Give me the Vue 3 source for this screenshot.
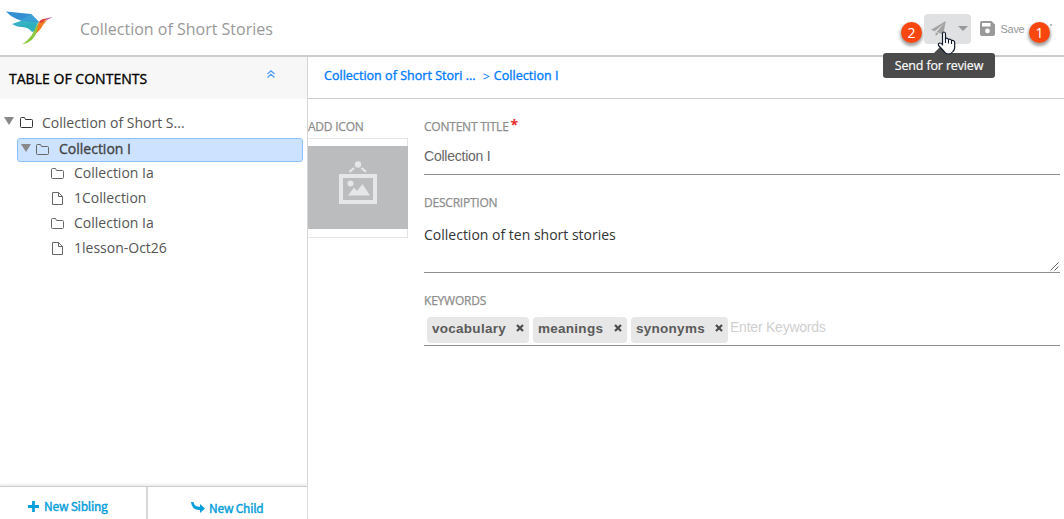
<script setup>
const children = [
  { label: 'Collection Ia', type: 'folder' },
  { label: '1Collection', type: 'file' },
  { label: 'Collection Ia', type: 'folder' },
  { label: '1lesson-Oct26', type: 'file' },
]
const keywords = ['vocabulary', 'meanings', 'synonyms']
</script>

<template>
  <div class="app">
    <header class="topbar">
      <svg class="logo" width="48" height="36" viewBox="0 0 48 36">
        <path d="M0 .5 L25 3 L33 11 L30 14 L16 10 Q6 7 0 .5Z" fill="#348fd2" />
        <path d="M25 3 L33 11 L15 9Z" fill="#3ba0d6" />
        <path d="M6 13 L16 9.500 L32 11 L29 20 L24 17 L10 15Z" fill="#35b2c4" />
        <path d="M10 15 L30 12 L29 20 L26 21 Q22 16 16 16Z" fill="#2faebb" />
        <path d="M33 11 L41 9 L37 14 Q34 20 28 24 L30 17Z" fill="#f47b20" />
        <path d="M33 11 Q36 7 41 8 L35 12Z" fill="#de4136" />
        <path d="M39 7.500 L47 6 L41 9Z" fill="#c75b9d" />
        <path d="M32 12.500 Q29 17 27 22 Q23 29 16 33.500 Q28 31 31 20Z" fill="#8bc63f" />
      </svg>
      <h1>Collection of Short Stories</h1>
      <div class="actions">
        <span class="badge two">2</span>
        <button class="send">
          <svg width="15" height="15" viewBox="0 0 16 16"><path d="M15.800 0 L0 9.200 L4 11 L13.500 3 L6 11.700 L13 14.500Z M5 12 V16 L8 13.400Z" fill="#a3a3a3" /></svg>
          <i></i>
        </button>
        <button class="save">
          <svg width="15" height="15" viewBox="0 0 15 15"><path fill-rule="evenodd" d="M2 0 H11.500 L15 3.500 V13 Q15 15 13 15 H2 Q0 15 0 13 V2 Q0 0 2 0Z M2 2 V5.500 H10.500 V2Z M7.500 7.500 A2.400 2.400 0 1 0 7.500 12.300 A2.400 2.400 0 1 0 7.500 7.500Z" fill="#999" /></svg>
          <span>Save</span>
        </button>
        <span class="badge one">1</span>
      </div>
      <div class="tooltip">Send for review</div>
      <svg class="cursor" width="19" height="24" viewBox="0 0 19 24">
        <path d="M5.500 13.500 V3 Q5.500 1 7 1 Q8.500 1 8.500 3 V7.500 Q10.300 6.500 11.500 8.500 Q13.500 7.500 14.500 9.500 Q17.700 9 17.700 12 V16.500 Q17.700 18.500 16 20.500 Q14 23 11.500 23 Q8.500 23 7.500 21 Q5 18 1.500 14.500 Q1 12.300 2.500 12 Q4 11.800 5.500 13.500Z" fill="#fff" stroke="#111a2b" stroke-width="1.200" />
        <path d="M8.500 7 V12 M11.500 8.500 V12.500 M14.500 9.500 V13" stroke="#111a2b" stroke-width="1.100" />
      </svg>
    </header>

    <div class="body">
      <aside>
        <div class="toc-head">
          <h2>TABLE OF CONTENTS</h2>
          <svg width="8" height="8" viewBox="0 0 8 8"><path d="M.5 4 L4 .8 L7.500 4 M.5 7.500 L4 4.300 L7.500 7.500" fill="none" stroke="#4b9cf5" stroke-width="1.200" /></svg>
        </div>
        <div class="tree">
          <div class="row root">
            <i class="arrow"></i>
            <svg width="13" height="11" viewBox="0 0 13 11"><path d="M.5 9.500 V1.500 Q.5 .5 1.500 .5 H4.500 L5.500 2.500 H11.500 Q12.500 2.500 12.500 3.500 V9.500 Q12.500 10.500 11.500 10.500 H1.500 Q.5 10.500 .5 9.500Z" fill="none" stroke="#333" /></svg>
            <span>Collection of Short S...</span>
          </div>
          <div class="row selected">
            <i class="arrow"></i>
            <svg width="13" height="11" viewBox="0 0 13 11"><path d="M.5 9.500 V1.500 Q.5 .5 1.500 .5 H4.500 L5.500 2.500 H11.500 Q12.500 2.500 12.500 3.500 V9.500 Q12.500 10.500 11.500 10.500 H1.500 Q.5 10.500 .5 9.500Z" fill="none" stroke="#666" /></svg>
            <span>Collection I</span>
          </div>
          <div v-for="(c, i) in children" :key="i" class="row child">
            <svg v-if="c.type === 'folder'" width="13" height="11" viewBox="0 0 13 11"><path d="M.5 9.500 V1.500 Q.5 .5 1.500 .5 H4.500 L5.500 2.500 H11.500 Q12.500 2.500 12.500 3.500 V9.500 Q12.500 10.500 11.500 10.500 H1.500 Q.5 10.500 .5 9.500Z" fill="none" stroke="#666" /></svg>
            <svg v-else width="13" height="13" viewBox="0 0 13 13"><path d="M1.500 .5 H7.500 L11.500 4.500 V12.500 H1.500Z M7.500 .5 V4.500 H11.500" fill="none" stroke="#666" /></svg>
            <span>{{ c.label }}</span>
          </div>
        </div>
        <footer>
          <button class="sibling">
            <svg width="11" height="11" viewBox="0 0 11 11"><path d="M5.500 0 V11 M0 5.500 H11" stroke="#069edb" stroke-width="2.800" /></svg>
            <span>New Sibling</span>
          </button>
          <button class="newchild">
            <svg width="14" height="11" viewBox="0 0 14 11"><path d="M0 0 H2.500 Q3 4.800 9 4.700 V2 L14 6.500 L9 11 V8 Q1 8.500 0 0Z" fill="#069edb" /></svg>
            <span>New Child</span>
          </button>
        </footer>
      </aside>

      <main>
        <nav><span class="crumb-a">Collection of Short Stori ...</span><b>&gt;</b><span class="crumb-b">Collection I</span></nav>
        <section>
          <div class="icon-col">
            <label class="l-icon">ADD ICON</label>
            <div class="frame">
              <div class="placeholder">
                <svg width="40" height="44" viewBox="0 0 40 44">
                  <g fill="none" stroke="#e5e6e7"><rect x="3" y="15" width="34" height="26" stroke-width="4" /><path d="M11.500 10.800 L16 7 M28 10.800 L23.500 7" stroke-width="2.200" /></g>
                  <circle cx="20" cy="3.500" r="3.200" fill="#e5e6e7" /><circle cx="12.500" cy="22.500" r="3" fill="#e5e6e7" />
                  <path d="M10 34.500 L16 26.500 L19 30 L24.500 23 L32 34.500Z" fill="#e5e6e7" />
                </svg>
              </div>
            </div>
          </div>
          <div class="form">
            <label class="l-title">CONTENT TITLE</label><em>*</em>
            <div class="field title"><span>Collection I</span></div>
            <label class="l-desc">DESCRIPTION</label>
            <div class="field desc"><span>Collection of ten short stories</span>
              <svg width="10" height="10" viewBox="0 0 10 10"><path d="M.5 8.500 L8.500 .5 M4.500 8.500 L8.500 4.500" stroke="#666" stroke-width="1" /></svg>
            </div>
            <label class="l-key">KEYWORDS</label>
            <div class="field keys">
              <span v-for="k in keywords" :key="k" class="tag" :class="k"><span>{{ k }}</span>
                <svg width="8" height="8" viewBox="0 0 8 8"><path d="M1 1 L7 7 M7 1 L1 7" stroke="#4c4c4c" stroke-width="2.200" /></svg>
              </span>
              <span class="ph">Enter Keywords</span>
            </div>
          </div>
        </section>
      </main>
    </div>
  </div>
</template>

<style>
body { margin: 0; overflow: hidden; background: #fff; }
</style>

<style scoped>
* { box-sizing: border-box; }
.app { width: 1064px; height: 519px; display: flex; flex-direction: column; overflow: hidden; background: #fff; font-family: "Open Sans", "Noto Sans", sans-serif; font-size: 14px; }
svg { display: block; flex: none; }
h1, h2 { margin: 0; font-weight: 400; }
button { border: 0; background: none; padding: 0; font: inherit; display: flex; align-items: center; }
span, h1, h2, label { white-space: nowrap; }
.topbar { position: relative; height: 57px; flex: none; display: flex; border-bottom: 2px solid #ccc; padding-left: 6px; }
.logo { margin-top: 11px; }
h1 { margin: 17px 0 0 26px; font-size: 16px; line-height: 24px; color: #999; }
.actions { margin-left: auto; display: flex; align-items: flex-start; padding: 14px 14px 0 0; }
.badge { width: 21px; height: 21px; border-radius: 50%; background: #f9470f; color: #fff; font: 14px/21px "Open Sans", sans-serif; text-align: center; box-shadow: 0 2px 3px 1px rgba(0,0,0,.35); }
.two { margin: 8px 2px 0 0; }
.one { position: relative; margin: 8px 0 0 4px; }
.one::after { content: ""; position: absolute; left: 21px; top: 2px; width: 2px; height: 2px; background: #bbb; }
.send { width: 47px; height: 30px; background: #e0e1e2; border-radius: 4px; padding-left: 7px; }
.send svg { margin-top: -2px; }
.send i { border: 5px solid transparent; border-top-color: #999; border-bottom: 0; margin: -2px 0 0 12px; }
.save { margin-left: 9px; height: 30px; font: 11px "Liberation Sans", Arial, sans-serif; color: #999; }
.save svg { margin-top: -1px; }
.save span { margin-left: 5px; width: 25px; letter-spacing: -.3px; }
.tooltip { position: absolute; z-index: 2; left: 883px; top: 53px; width: 112px; height: 25px; border-radius: 3px; background: #4b4b4b; color: #fff; font: 12.500px/25px "Open Sans", sans-serif; letter-spacing: -.15px; text-align: center; white-space: nowrap; -webkit-text-stroke: .15px #fff; }
.tooltip::before { content: ""; position: absolute; left: 50px; top: -6px; border: 7px solid transparent; border-bottom-color: #4b4b4b; border-top: 0; }
.cursor { position: absolute; z-index: 3; left: 937px; top: 31px; }
.body { flex: 1; min-height: 0; display: flex; }
aside { width: 308px; flex: none; border-right: 1px solid #d6d6d6; display: flex; flex-direction: column; }
.toc-head { height: 42px; background: #f7f7f7; display: flex; justify-content: space-between; padding: 0 32px 0 9px; }
h2 { font-size: 14px; line-height: 20px; margin-top: 12px; color: #000; letter-spacing: .03px; -webkit-text-stroke: .35px #000; }
.toc-head svg { margin-top: 13px; }
.tree { flex: 1; padding-top: 11px; color: #555; }
.row { height: 25px; display: flex; align-items: center; }
.row svg { margin-top: 1px; }
.arrow { border: 5px solid transparent; border-top: 8px solid #888; border-bottom: 0; margin-top: -3px; }
.root { padding-left: 4px; }
.root svg { margin: 0 0 0 6px; }
.root span { margin-left: 9px; }
.selected { width: 286px; height: 24px; margin: 3px 0 -2px 17px; background: #cde2fe; border: 1px solid #8bc0fa; border-radius: 3px; padding-left: 3px; color: #444; -webkit-text-stroke: .35px #444; }
.selected .arrow { margin-top: -5px; }
.selected svg { margin: -2px 0 0 5px; }
.selected span { margin: -4px 0 0 10px; }
.child { padding-left: 51px; }
.child span { margin-left: 10px; }
footer { height: 33px; display: flex; border-top: 1px solid #ccc; box-shadow: 0 -2px 2px #eee; color: #069edb; font: 12px "Noto Sans CJK SC", sans-serif; }
footer button { color: #069edb; align-items: flex-start; -webkit-text-stroke: .4px #069edb; letter-spacing: -.25px; }
footer svg { margin-top: 14px; }
.sibling { width: 148px; border-right: 2px solid #d8d8d8; padding-left: 28px; }
.sibling span { margin: 10px 0 0 5px; line-height: 18px; }
.newchild { padding-left: 43px; }
.newchild svg { margin-top: 15px; }
.newchild span { margin: 12px 0 0 4px; line-height: 18px; }
main { flex: 1; min-width: 0; }
nav { height: 42px; border-bottom: 1px solid #ccc; display: flex; padding: 9px 0 0 16px; font-size: 12.500px; line-height: 19px; color: #007bff; letter-spacing: .03px; -webkit-text-stroke: .35px #007bff; }
nav b { font-weight: 400; margin: 1px 4px 0 7px; -webkit-text-stroke: 0; }
section { display: flex; padding-top: 19px; }
.icon-col { width: 100px; margin-right: 16px; }
label { display: inline-block; font-size: 12px; line-height: 18px; height: 18px; color: #8d8d8d; letter-spacing: -.22px; -webkit-text-stroke: .25px #8d8d8d; }
.icon-col label { display: block; }
.frame { height: 100px; margin-top: 2px; border: 1px solid #e4e4e4; border-left: 0; padding-top: 7px; }
.placeholder { width: 100px; height: 83px; background: #bbbcbe; display: flex; justify-content: center; padding: 15px 0 0; }
.form { width: 636px; display: flex; flex-wrap: wrap; align-content: flex-start; }
em { color: #e82c2c; font: 700 14px/16px "Open Sans", sans-serif; margin: -1px 0 0 2px; height: 17px; }
.field { width: 100%; flex: none; border-bottom: 1px solid #8e8e8e; display: flex; position: relative; }
.title { height: 39px; margin-bottom: 19px; font: 14px/20px "Liberation Sans", Arial, sans-serif; color: #666; padding-top: 10px; letter-spacing: -.23px; }
.desc { height: 61px; margin-bottom: 19px; color: #333; line-height: 20px; padding-top: 13px; }
.desc svg { position: absolute; right: 0; bottom: 0; }
.keys { height: 36px; padding: 7px 0 0 3px; }
.tag { height: 26px; border-radius: 4px; background: #e7e7e7; color: #5a5a5a; font: 700 13.500px/23px "Liberation Sans", Arial, sans-serif; letter-spacing: .27px; padding: 0 5px; margin-right: 4px; display: flex; justify-content: space-between; }
.tag svg { margin-top: 7px; }
.vocabulary { width: 102px; }
.meanings { width: 94px; }
.synonyms { width: 97px; margin-right: 2px; }
.ph { color: #d0d0d0; font: 14px/21px "Liberation Sans", Arial, sans-serif; letter-spacing: -.23px; }
</style>
